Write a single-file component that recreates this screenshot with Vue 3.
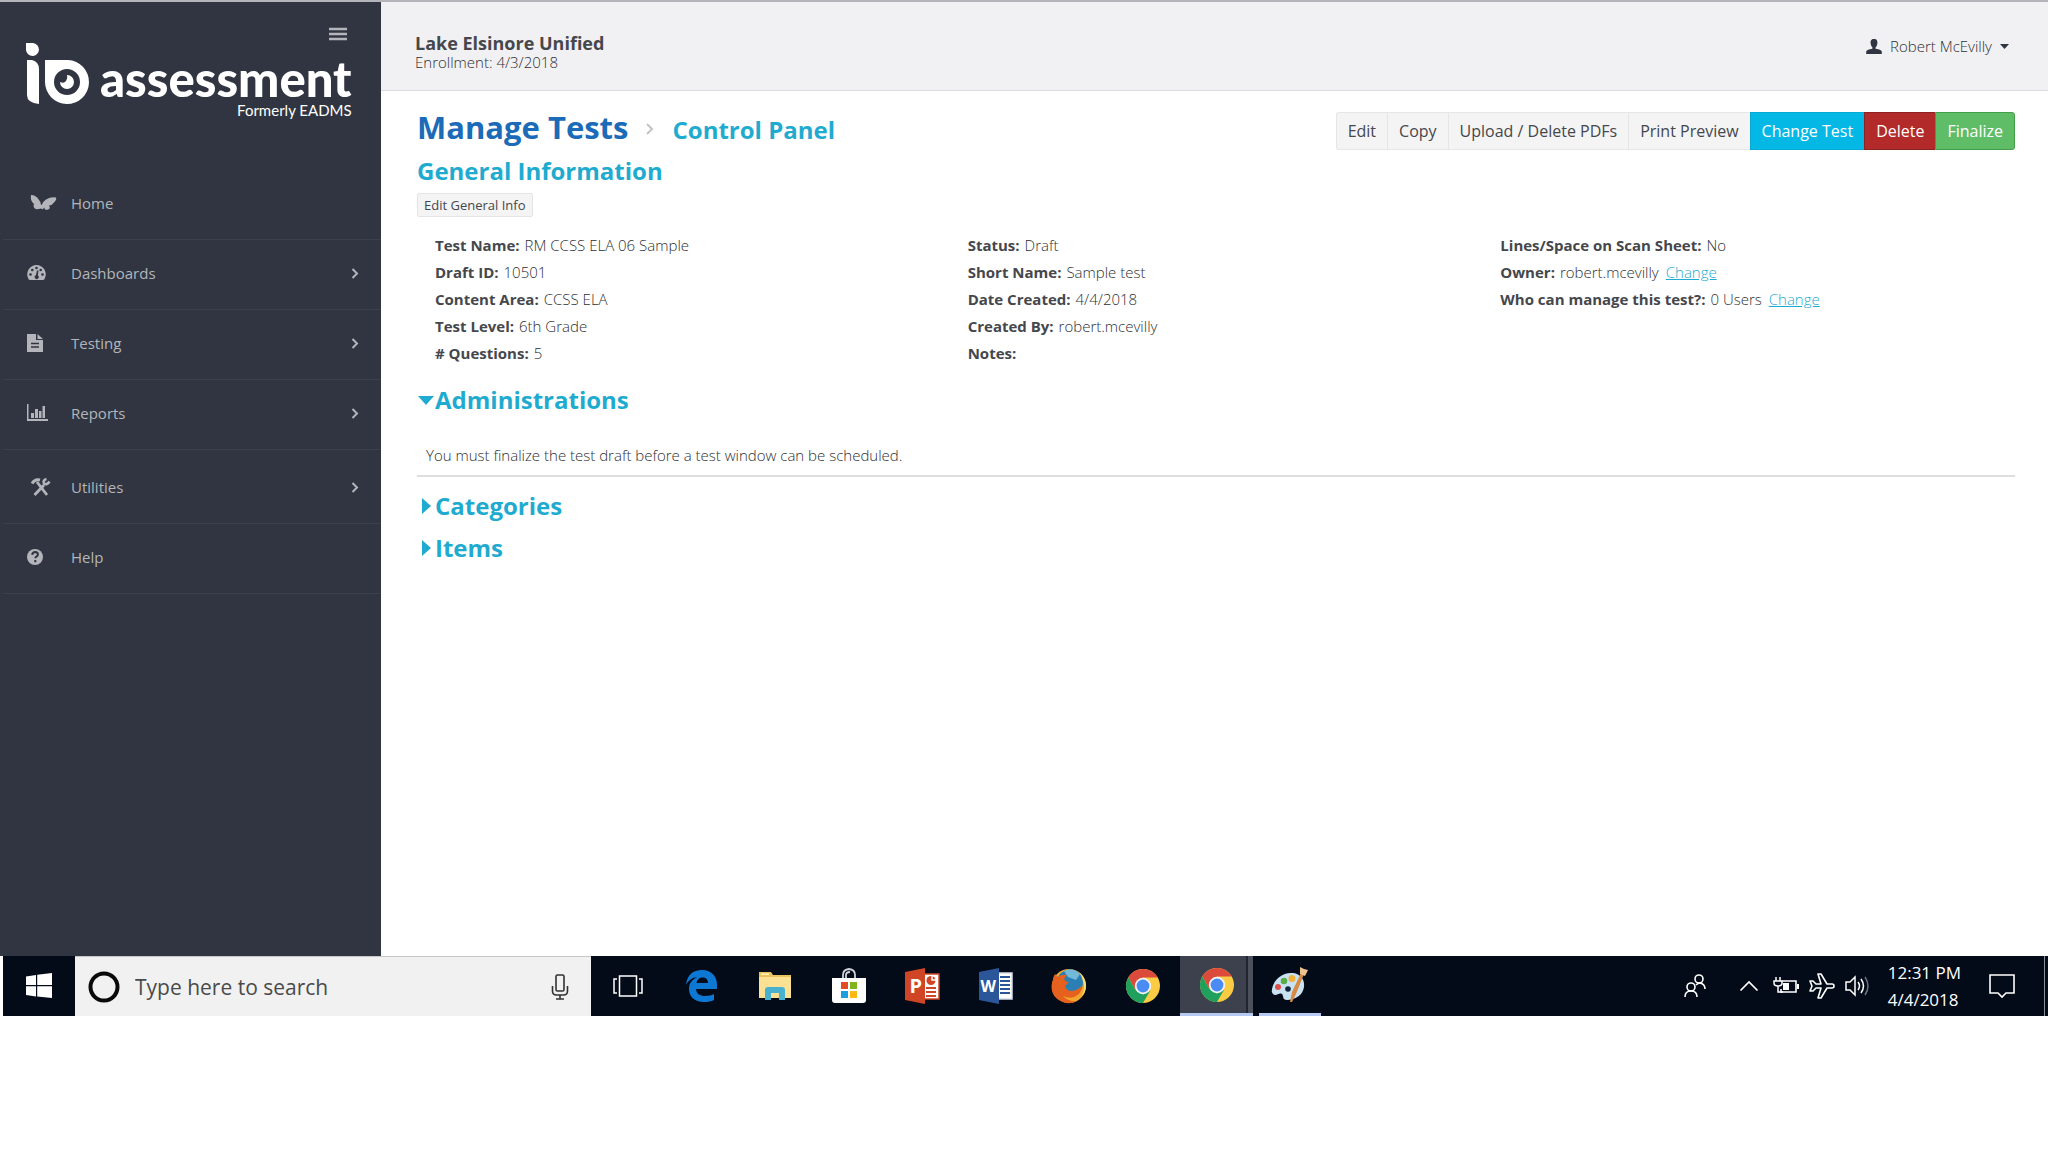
<!-- Control panel of a single test draft, with the desktop taskbar below it -->
<script setup>
import { reactive, ref } from 'vue'

const navItems = [
  { label: 'Home', icon: 'butterfly', arrow: false },
  { label: 'Dashboards', icon: 'gauge', arrow: true },
  { label: 'Testing', icon: 'file', arrow: true },
  { label: 'Reports', icon: 'chart', arrow: true },
  { label: 'Utilities', icon: 'tools', arrow: true },
  { label: 'Help', icon: 'help', arrow: false },
]

const actions = [
  { label: 'Edit', kind: 'plain' },
  { label: 'Copy', kind: 'plain' },
  { label: 'Upload / Delete PDFs', kind: 'plain' },
  { label: 'Print Preview', kind: 'plain' },
  { label: 'Change Test', kind: 'primary' },
  { label: 'Delete', kind: 'danger' },
  { label: 'Finalize', kind: 'success' },
]

const columns = [
  [
    { label: 'Test Name', value: 'RM CCSS ELA 06 Sample' },
    { label: 'Draft ID', value: '10501' },
    { label: 'Content Area', value: 'CCSS ELA' },
    { label: 'Test Level', value: '6th Grade' },
    { label: '# Questions', value: '5' },
  ],
  [
    { label: 'Status', value: 'Draft' },
    { label: 'Short Name', value: 'Sample test' },
    { label: 'Date Created', value: '4/4/2018' },
    { label: 'Created By', value: 'robert.mcevilly' },
    { label: 'Notes', value: '' },
  ],
  [
    { label: 'Lines/Space on Scan Sheet', value: 'No' },
    { label: 'Owner', value: 'robert.mcevilly', change: true },
    { label: 'Who can manage this test?', value: '0 Users', change: true },
  ],
]

const open = reactive({ administrations: true, categories: false, items: false })
const search = ref('')
</script>

<template>
  <div class="screen">
    <div class="app">
      <aside class="sidebar">
        <button class="menu-toggle" type="button" aria-label="Toggle menu">
          <svg width="18" height="14" viewBox="0 0 18 14"><path d="M0 2h18M0 7h18M0 12h18" stroke="currentColor" stroke-width="2.6" /></svg>
        </button>
        <div class="logo">
          <svg width="64" height="64" viewBox="0 0 64 64" aria-hidden="true">
            <path d="M0 0h7a6.5 6.5 0 1 1-7 7zM1 17h5q7 2 7 9v35q-12-1-12-9z" fill="#fff" />
            <path fill-rule="evenodd" d="M19 17h23a22 22 0 1 1-23 22zm22 9a13 13 0 1 0 0 26a13 13 0 0 0 0-26z" fill="#fff" />
            <path d="M41 32a7 7 0 1 1-7 7q4 2 6-1q2-3 1-6z" fill="#fff" />
          </svg>
          <div class="logo-text">
            <span class="logo-name">assessment</span>
            <span class="logo-sub">Formerly EADMS</span>
          </div>
        </div>

        <nav>
          <ul class="nav">
            <li v-for="item in navItems" :key="item.label" :class="{ tall: item.icon === 'tools' }">
              <a href="#" class="nav-link">
                <svg class="nav-icon" width="30" height="24" viewBox="0 0 30 24" fill="currentColor" aria-hidden="true">
                  <path v-if="item.icon === 'butterfly'" d="M4 4q5 0 8 5 2 2 2 5l1-.5q1-3 4-5 5-3 10-2 1 2-2 5-2 3-5 3 2 3-1 4-3 1.500-4-2-1 3-3 1-6 2-7-1-1-2 0-3.500-4-3-3-9z" />
                  <g v-else-if="item.icon === 'gauge'">
                    <path d="M9.500 4a9.300 9.300 0 0 1 8.500 13q-.5 2-2 2H3q-1.500 0-2-2A9.300 9.300 0 0 1 9.500 4z" />
                    <g fill="#303541">
                      <circle cx="3.500" cy="13.500" r="1.300" /><circle cx="5.300" cy="9" r="1.300" /><circle cx="9.500" cy="7" r="1.300" />
                      <circle cx="13.700" cy="9" r="1.300" /><circle cx="15.500" cy="13.500" r="1.300" />
                      <path d="M10 9.500h1.500l-.6 5a2 2 0 1 1-2-.2z" />
                    </g>
                  </g>
                  <g v-else-if="item.icon === 'file'">
                    <path d="M0 3h9v6h7v12H0zM10.500 3L16 8h-5.500z" />
                    <path d="M4 12.500h8M4 16h8" stroke="#303541" stroke-width="1.500" />
                  </g>
                  <path v-else-if="item.icon === 'chart'" d="M0 3h1.500v15H21v2H0zM4 12h3v5H4zM8 8h3v9H8zM12 10h2.500v7H12zM15.500 5H18v12h-2.500z" />
                  <g v-else-if="item.icon === 'tools'" fill="none" stroke="currentColor">
                    <path d="M5 8.500q3-5 8-3.500" stroke-width="3" />
                    <path d="M10 7l10 13" stroke-width="2.800" />
                    <path d="M7.500 20L17 10" stroke-width="2.800" />
                    <path d="M19.500 4q-4 1-2.500 4.500 3 2 5.500-2" stroke-width="2.600" />
                  </g>
                  <g v-else>
                    <circle cx="8" cy="12" r="8" />
                    <path d="M5.200 9.800q.3-2.800 3-2.800 2.800.2 2.700 2.400 0 1.200-1.600 2.200-.9.500-.9 1.700M8.300 15v2.200" fill="none" stroke="#303541" stroke-width="2" />
                  </g>
                </svg>
                <span>{{ item.label }}</span>
                <svg v-if="item.arrow" class="nav-arrow" width="8" height="12" viewBox="0 0 8 12" aria-hidden="true"><path d="M1.500 2L6 6.500 1.500 11" fill="none" stroke="currentColor" stroke-width="2" /></svg>
              </a>
            </li>
          </ul>
        </nav>
      </aside>

      <div class="page">
        <header class="topbar">
          <div class="account">
            <div class="district">Lake Elsinore Unified</div>
            <div class="enrollment">Enrollment: 4/3/2018</div>
          </div>
          <button class="user" type="button">
            <svg width="16" height="16" viewBox="0 0 16 16" aria-hidden="true"><path d="M8 1c3 0 3.600 2 3.400 4.500q-.3 2.500-1.800 3.800v1.500q5.400.8 6.200 2.700V16H.2v-2.500q.8-1.900 6.200-2.700V9.300Q4.900 8 4.600 5.500C4.400 3 5 1 8 1z" fill="#303541" /></svg>
            <span>Robert McEvilly</span>
            <svg width="9" height="5" viewBox="0 0 9 5" aria-hidden="true"><path d="M0 0h9L4.500 5z" fill="#303541" /></svg>
          </button>
        </header>

        <main class="content">
          <div class="title-row">
            <div class="breadcrumb">
              <h1>Manage Tests</h1>
              <svg width="8" height="16" viewBox="0 0 8 16" aria-hidden="true"><path d="M1 1l5 5-5 5" fill="none" stroke="#c4c4c4" stroke-width="2" /></svg>
              <span class="heading">Control Panel</span>
            </div>
            <div class="actions">
              <button v-for="a in actions" :key="a.label" type="button" :class="a.kind">{{ a.label }}</button>
            </div>
          </div>

          <h2 class="heading">General Information</h2>
          <button class="edit-info" type="button">Edit General Info</button>

          <div class="info">
            <dl v-for="(column, i) in columns" :key="i">
              <div v-for="row in column" :key="row.label">
                <dt>{{ row.label }}:</dt>
                <dd>{{ row.value }}</dd>
                <dd v-if="row.change"><a href="#">Change</a></dd>
              </div>
            </dl>
          </div>

          <h2 class="heading">
            <button class="section-toggle" type="button" :aria-expanded="open.administrations" @click="open.administrations = !open.administrations">
              <svg width="18" height="18" viewBox="0 0 18 18" aria-hidden="true"><path :d="open.administrations ? 'M1 5h16l-8 9z' : 'M5 1l9 8-9 8z'" fill="currentColor" /></svg>
              Administrations
            </button>
          </h2>
          <p v-if="open.administrations" class="notice">You must finalize the test draft before a test window can be scheduled.</p>
          <h2 class="heading">
            <button class="section-toggle" type="button" :aria-expanded="open.categories" @click="open.categories = !open.categories">
              <svg width="18" height="18" viewBox="0 0 18 18" aria-hidden="true"><path :d="open.categories ? 'M1 5h16l-8 9z' : 'M5 1l9 8-9 8z'" fill="currentColor" /></svg>
              Categories
            </button>
          </h2>
          <h2 class="heading">
            <button class="section-toggle" type="button" :aria-expanded="open.items" @click="open.items = !open.items">
              <svg width="18" height="18" viewBox="0 0 18 18" aria-hidden="true"><path :d="open.items ? 'M1 5h16l-8 9z' : 'M5 1l9 8-9 8z'" fill="currentColor" /></svg>
              Items
            </button>
          </h2>
        </main>
      </div>
    </div>

    <footer class="taskbar">
      <button class="start" type="button" aria-label="Start">
        <svg width="26" height="26" viewBox="0 0 26 26"><path d="M0 3.500l10-1.500v10H0zM11.200 1.800L26 0v12H11.200zM0 13.200h10v10.300L0 22zM11.200 13.200H26V25l-14.800-1.500z" fill="#fff" /></svg>
      </button>
      <label class="search">
        <svg width="34" height="34" viewBox="0 0 34 34" aria-hidden="true"><circle cx="17" cy="17" r="13.500" fill="none" stroke="#0a0a0a" stroke-width="4" /></svg>
        <input v-model="search" type="text" placeholder="Type here to search" aria-label="Search" />
        <svg width="18" height="26" viewBox="0 0 18 26" fill="none" stroke="#333" stroke-width="1.600" aria-hidden="true">
          <rect x="5" y="1" width="8" height="16" rx="1.500" /><path d="M1.500 12v5q0 4 4 4h7q4 0 4-4v-5M9 21v4M5 25h8" />
        </svg>
      </label>

      <div class="tasks">
        <button type="button" aria-label="Task View">
          <svg width="30" height="24" viewBox="0 0 30 24" fill="none" stroke="#fff" stroke-width="1.500"><path d="M6.500 2h17v20h-17zM4 5H1v14h3M26 5h3v14h-3" /></svg>
        </button>
        <button type="button" aria-label="Edge">
          <svg width="32" height="34" viewBox="0 0 32 34"><path d="M1 16C2 6 8 1 17 1c10 0 15 7 15 15v4H11c.5 5 4 7 9 7 4 0 7-1 9-2v6c-3 1.500-6 2-10 2C9 33 4 27 4 20c0-6 3-9 8-12-6 1-9 4-11 8zm10.500-2H23c0-3.500-2-5.500-5.500-5.500S12 11 11.500 14z" fill="#0d78d4" fill-rule="evenodd" /></svg>
        </button>
        <button type="button" aria-label="File Explorer">
          <svg width="34" height="30" viewBox="0 0 34 30"><path d="M1 1h12l2 3h18v23H1z" fill="#e9c45c" /><path d="M1 6h32v21H1z" fill="#fbe193" /><path d="M3 2.500h8v1.500H3z" fill="#fff3c0" /><path d="M7 29V19q0-3 3-3h14q3 0 3 3v10h-6v-7h-8v7z" fill="#48b1cf" /></svg>
        </button>
        <button type="button" aria-label="Store">
          <svg width="36" height="36" viewBox="0 0 36 36"><path d="M12 10V7q0-5.500 6-6 6 .5 6 6v3M15 10V7q0-3 4-3" fill="none" stroke="#cfd3da" stroke-width="1.800" /><path d="M1 10h34v22q0 3-3 3H4q-3 0-3-3z" fill="#fff" /><path d="M10 14h7v7h-7z" fill="#e64a25" /><path d="M19 14h7v7h-7z" fill="#7fb51a" /><path d="M10 23h7v7h-7z" fill="#1c9fe0" /><path d="M19 23h7v7h-7z" fill="#fdb813" /></svg>
        </button>
        <button type="button" aria-label="PowerPoint">
          <svg width="36" height="36" viewBox="0 0 36 36"><path d="M20 6h15v25H20z" fill="#fff" stroke="#cf4526" stroke-width="1.500" /><path d="M22 20h10M22 24h10M22 28h10" stroke="#cf4526" stroke-width="1.800" /><circle cx="27" cy="12.500" r="4.500" fill="#cf4526" /><path d="M28 7v5h6" fill="none" stroke="#fff" stroke-width="1.500" /><path d="M1 4l20-4v36L1 32z" fill="#cf4526" /><text x="5.500" y="25" class="tile-letter">P</text></svg>
        </button>
        <button type="button" aria-label="Word">
          <svg width="36" height="36" viewBox="0 0 36 36"><path d="M20 5h14v26H20z" fill="#fff" stroke="#d5dcea" stroke-width="1.500" /><path d="M22 9h10M22 13h10M22 17h10M22 21h10M22 25h10" stroke="#2b579a" stroke-width="1.800" /><path d="M1 4l20-4v36L1 32z" fill="#2b579a" /><text x="2.500" y="24" class="tile-letter small">W</text></svg>
        </button>
        <button type="button" aria-label="Firefox">
          <svg width="36" height="36" viewBox="0 0 36 36">
            <circle cx="18" cy="18" r="17" fill="#f3a52e" />
            <circle cx="19" cy="14.500" r="13" fill="#2a7fb4" /><path d="M13 3q9-4 16 3l-4 6-8-3z" fill="#72b9da" />
            <path d="M4 6l3 3q4-3 9-2l-3 4q1 3 5 3l-4 4q1 5 7 5 7-1 10-6 0 9-8 12-5 2-11-1 5 6 14 5-7 4-14 1C0 30-1 19 2 12c0-3 1-4 2-6z" fill="#e5611d" />
            <path d="M28 4c9 7 9 19 2 25q5-8 2-16-1-5-4-9z" fill="#fbe06a" />
          </svg>
        </button>
        <button v-for="n in 2" :key="n" type="button" aria-label="Chrome" :class="{ active: n === 2 }">
          <svg width="34" height="34" viewBox="0 0 34 34">
            <circle cx="17" cy="17" r="17" fill="#fbcb43" />
            <path d="M2.300 8.500A17 17 0 0 1 31.700 8.500H17l-7.400 12.700z" fill="#dc4a3c" />
            <path d="M2.300 8.500A17 17 0 0 0 17 34l7.400-12.700-7.400 4.200-7.400-4.200z" fill="#1fa15d" />
            <circle cx="17" cy="17" r="8.200" fill="#f2f4f7" /><circle cx="17" cy="17" r="6.400" fill="#4b8bf4" />
          </svg>
        </button>
        <button type="button" aria-label="Paint" class="running">
          <svg width="38" height="36" viewBox="0 0 38 36">
            <path d="M1 22C3 11 13 5 22 6c8 1 12 7 11 14-1 8-9 13-17 13-5 0-3-4-5-6-3-2-6 3-9 0q-2-2-1-5z" fill="#c9e2f1" />
            <circle cx="7" cy="20" r="3" fill="#da4f4a" /><circle cx="13" cy="14" r="3.300" fill="#5aac4b" /><circle cx="21" cy="11.500" r="3.500" fill="#f0b23c" /><circle cx="17" cy="22" r="2.800" fill="#10233c" />
            <path d="M19 35l2-10 9-19 3 1-8 20-4 8z" fill="#d58b43" /><path d="M29 0l4 2 4 1-3 6-5-2z" fill="#edc28e" />
          </svg>
        </button>
      </div>

      <div class="tray">
        <button type="button" aria-label="People">
          <svg width="24" height="26" viewBox="0 0 24 26" fill="none" stroke="#fff" stroke-width="1.600"><circle cx="16" cy="6" r="4" /><circle cx="8" cy="14" r="4" /><path d="M2 24q0-6 6-6t6 6M13 12q2-2 4-2 5 1 5 6" /></svg>
        </button>
        <button class="wide" type="button" aria-label="Show hidden icons">
          <svg width="20" height="12" viewBox="0 0 20 12" fill="none" stroke="#fff" stroke-width="1.700"><path d="M1.500 10.500L10 2l8.500 8.500" /></svg>
        </button>
        <button type="button" aria-label="Battery">
          <svg width="26" height="18" viewBox="0 0 26 18"><path d="M9 4h14v11H8v-3" fill="none" stroke="#fff" stroke-width="1.600" /><path d="M24 7h2v5h-2zM10 6h6v7h-6z" fill="#fff" /><path d="M3 0v4M7 0v4M1 4h8v2q0 3-4 3t-4-3zM5 9v6h5" fill="none" stroke="#fff" stroke-width="1.500" /></svg>
        </button>
        <button type="button" aria-label="Airplane mode">
          <svg width="26" height="26" viewBox="0 0 26 26" fill="none" stroke="#fff" stroke-width="1.600" stroke-linejoin="round"><path d="M1 8h3l3 3h5L9 1h3l6 10h5q2 0 2 2t-2 2h-5l-6 10H9l3-10H7l-3 3H1l2-5z" /></svg>
        </button>
        <button type="button" aria-label="Volume">
          <svg width="26" height="22" viewBox="0 0 26 22" fill="none" stroke="#fff" stroke-width="1.500"><path d="M1 7h4l5-5v18l-5-5H1zM13 7q3 4 0 8M16 4q5 7 0 14" /><path d="M20 2q6 9 0 18" stroke="#6b7280" /></svg>
        </button>
        <div class="clock"><span>12:31 PM</span><span>4/4/2018</span></div>
        <button type="button" aria-label="Notifications">
          <svg width="26" height="26" viewBox="0 0 26 26" fill="none" stroke="#fff" stroke-width="1.600"><path d="M1 2h24v18h-8l-4 4-4-4H1z" /></svg>
        </button>
        <span class="peek"></span>
      </div>
    </footer>
  </div>
</template>

<style>
body {
  background: #fff;
}
</style>

<style scoped>
* {
  box-sizing: border-box;
}

button {
  padding: 0;
  border: 0;
  background: none;
  color: inherit;
  font: inherit;
  cursor: pointer;
}

h1,
h2,
p,
ul,
dl,
dd {
  margin: 0;
}

.screen {
  display: flex;
  flex-direction: column;
  min-height: 100vh;
  padding-bottom: 135px;
  color: #45474c;
  font-family: 'Open Sans', 'Noto Sans', sans-serif;
  font-size: 15px;
}

.app {
  flex: 1;
  display: flex;
  border-top: 2px solid #b4b5ba;
}

.sidebar {
  flex: none;
  display: flex;
  flex-direction: column;
  width: 381px;
  background: #303541;
  color: #b3b5ba;
}

.menu-toggle {
  align-self: flex-end;
  height: 14px;
  margin: 25px 34px 0 0;
}

.menu-toggle svg {
  display: block;
}

.logo {
  display: flex;
  gap: 10px;
  height: 129px;
  padding: 2px 0 0 26px;
  color: #fff;
}

.logo-text {
  display: flex;
  flex-direction: column;
  align-items: flex-end;
  padding-top: 10px;
  font-family: Lato, sans-serif;
}

.logo-name {
  font-size: 49px;
  font-weight: 900;
  line-height: 50px;
}

.logo-sub {
  font-size: 15px;
  line-height: 15px;
}

.nav {
  padding: 0 0 0 3px;
  list-style: none;
}

.nav li {
  height: 70px;
  padding-bottom: 4px;
  border-bottom: 1px solid #3b404c;
}

.nav li.tall {
  height: 74px;
  padding-bottom: 0;
}

.nav-link {
  display: flex;
  align-items: center;
  height: 100%;
  padding: 0 22px 0 24px;
  color: inherit;
  text-decoration: none;
}

.nav-icon {
  margin-right: 14px;
}

.nav-arrow {
  margin-left: auto;
}

.page {
  flex: 1;
  min-width: 0;
}

.topbar {
  display: flex;
  align-items: center;
  justify-content: space-between;
  height: 89px;
  padding: 0 39px 0 34px;
  border-bottom: 1px solid #dcdcde;
  background: #f1f1f3;
}

.account {
  padding-top: 12px;
}

.district {
  font-size: 18px;
  font-weight: 700;
  line-height: 20px;
}

.enrollment,
.user,
.info dd,
.notice {
  color: #2e3034;
  font-weight: 300;
}

.enrollment {
  line-height: 18px;
}

.user {
  display: flex;
  align-items: center;
  gap: 8px;
}

.content {
  padding: 21px 33px 0 36px;
}

.title-row {
  display: flex;
  justify-content: space-between;
  height: 38px;
}

.breadcrumb {
  display: flex;
  align-items: baseline;
  gap: 18px;
}

h1 {
  color: #1b6bb8;
  font-size: 31px;
  font-weight: 700;
  line-height: 30px;
}

.heading {
  color: #1fabd0;
  font-size: 24px;
  font-weight: 700;
  line-height: 42px;
}

.breadcrumb .heading {
  line-height: 30px;
}

.actions {
  display: flex;
}

.actions button {
  padding: 0 11px;
  border: 1px solid #e6e6e6;
  border-right: 0;
  background: #f4f4f4;
  font-size: 16px;
}

.actions button:first-child {
  border-radius: 3px 0 0 3px;
}

.actions button:last-child {
  border-radius: 0 3px 3px 0;
}

.actions button.primary {
  border-color: #04a9d4;
  background: #04b8e6;
  color: #fff;
}

.actions button.danger {
  border-color: #8d2222;
  background: #b32a2a;
  color: #fff;
}

.actions button.success {
  border: 1px solid #449d48;
  background: #5fbd68;
  color: #fff;
}

.edit-info {
  display: block;
  height: 24px;
  margin-top: 1px;
  padding: 0 6px;
  border: 1px solid #e4e4e4;
  border-radius: 2px;
  background: #f4f4f4;
  font-size: 13px;
  line-height: 22px;
}

.info {
  display: grid;
  grid-template-columns: repeat(3, 1fr);
  padding: 15px 0 12px;
}

.info dl {
  padding-left: 18px;
}

.info dl > div {
  display: flex;
  gap: 5px;
  line-height: 27px;
}

.info dt {
  font-weight: 700;
}

.info a {
  margin-left: 2px;
  color: #1fabd0;
}

.section-toggle {
  display: flex;
  align-items: center;
}

.notice {
  margin-bottom: 8px;
  padding: 21px 9px 6px;
  border-bottom: 2px solid #dedede;
  line-height: 27px;
}

.taskbar {
  display: flex;
  height: 60px;
  margin-left: 3px;
  background: #030a18;
  color: #fff;
}

.start {
  width: 72px;
}

.start svg {
  vertical-align: middle;
}

.search {
  display: flex;
  align-items: center;
  gap: 14px;
  width: 516px;
  padding: 0 22px 0 12px;
  border-top: 1px solid #c6c7cb;
  background: #f1f1f1;
}

.search input {
  flex: 1;
  min-width: 0;
  padding: 0;
  border: 0;
  outline: 0;
  background: transparent;
  color: #444;
  font: inherit;
  font-size: 21px;
}

.search input::placeholder {
  color: #4a4a4a;
  opacity: 1;
}

.tasks {
  display: grid;
  grid-template-columns: repeat(10, 1fr);
  width: 736px;
}

.tasks button {
  display: flex;
  align-items: center;
  justify-content: center;
}

.tasks .active {
  border-bottom: 3px solid #b5c9f2;
  background: linear-gradient(to left, #4b505c 5px, #20252f 5px, #20252f 7px, #3c414d 7px);
}

.tasks .running {
  margin: 0 6px;
  border-bottom: 3px solid #b5c9f2;
}

.tile-letter {
  fill: #fff;
  font-size: 20px;
  font-weight: 700;
}

.tile-letter.small {
  font-size: 16px;
}

.tray {
  display: flex;
  align-items: center;
  gap: 10px;
  margin-left: auto;
}

.tray button {
  display: flex;
}

.tray .wide {
  margin: 0 4px 0 22px;
}

.clock {
  display: flex;
  flex-direction: column;
  margin: 0 18px 0 7px;
  font-size: 17px;
  line-height: 27px;
}

.peek {
  align-self: stretch;
  width: 4px;
  margin-left: 19px;
  border-left: 1px solid #8b8f98;
}
</style>
